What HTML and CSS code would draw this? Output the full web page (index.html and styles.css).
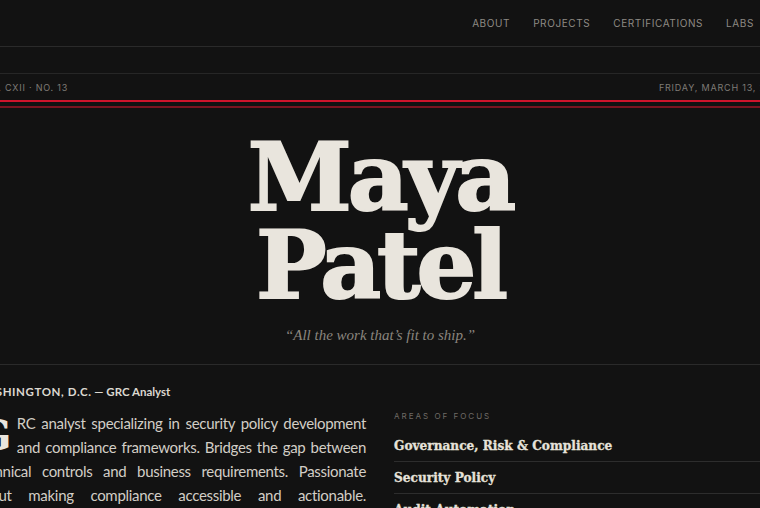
FILE: index.html
```html
<!DOCTYPE html>
<html lang="en">

<head>
    <meta charset="UTF-8">
    <meta name="viewport" content="width=device-width, initial-scale=1.0">
    <title>Maya Patel — GRC Analyst</title>
    <link rel="stylesheet" href="styles.css">
</head>

<body>
    <!-- top navigation -->
    <header class="site-nav">
        <div class="page nav-inner">
            <nav class="nav-links">
                <a href="#about">About</a>
                <a href="#projects">Projects</a>
                <a href="#certs">Certifications</a>
                <a href="#labs">Labs</a>
            </nav>
        </div>
    </header>

    <div class="spacer"></div>

    <!-- dateline -->
    <div class="dateline">
        <div class="page dateline-inner">
            <span>Vol. CXII · No. 13</span>
            <span>Friday, March 13, 2026</span>
        </div>
    </div>
    <div class="red-rule"></div>

    <!-- masthead -->
    <section class="masthead">
        <h1 class="name">Maya<br>Patel</h1>
        <p class="tagline">“All the work that’s fit to ship.”</p>
    </section>

    <!-- about + focus -->
    <main class="page columns">
        <article class="lede">
            <p class="location"><span class="city">Washington, D.C.</span> — GRC Analyst</p>
            <p class="body-text"><span class="drop-cap">G</span>RC analyst specializing in security policy development
                and compliance frameworks. Bridges the gap between technical controls and business requirements.
                Passionate about making compliance accessible and actionable. Experienced with NIST 800-53,
                ISO 27001 and SOC 2 audit programs.</p>
        </article>

        <aside class="focus">
            <h2 class="focus-title">Areas of Focus</h2>
            <ul class="focus-list">
                <li>Governance, Risk &amp; Compliance</li>
                <li>Security Policy</li>
                <li>Audit Automation</li>
                <li>Vendor Risk</li>
            </ul>
        </aside>
    </main>
</body>

</html>
```

FILE: styles.css
```css
/* base */
html {
    overflow: hidden;
}

body {
    margin: 0;
    background-color: #121212;
    color: #e9e5dd;
    font-family: Lato, "Noto Sans", sans-serif;
    display: flex;
    flex-direction: column;
    align-items: center;
}

/* wide page column, centred (spills past both edges on small windows) */
.page {
    width: 810px;
    flex-shrink: 0;
    box-sizing: border-box;
}

/* navigation */
.site-nav {
    width: 100%;
    display: flex;
    justify-content: center;
    border-bottom: 1px solid #2a2a2a;
}

.nav-inner {
    height: 46px;
    display: flex;
    justify-content: flex-end;
    align-items: center;
    padding-right: 31px;
}

.nav-links {
    display: flex;
    gap: 23px;
}

.nav-links a {
    color: #8e8a84;
    text-decoration: none;
    text-transform: uppercase;
    font-family: Inter, sans-serif;
    font-size: 10px;
    letter-spacing: 0.6px;
}

.spacer {
    height: 26px;
}

/* dateline */
.dateline {
    width: 100%;
    display: flex;
    justify-content: center;
    border-top: 1px solid #262626;
    border-bottom: 2px solid #d0142c;
}

.dateline-inner {
    height: 26px;
    display: flex;
    justify-content: space-between;
    align-items: center;
    padding-left: 3px;
    text-transform: uppercase;
    font-family: Inter, sans-serif;
    font-size: 9px;
    letter-spacing: 0.8px;
    color: #7f7b76;
}

.red-rule {
    width: 100%;
    height: 2px;
    margin-top: 4px;
    background-color: #7a1420;
}

/* masthead */
.masthead {
    width: 100%;
    text-align: center;
    border-bottom: 1px solid #2a2a2a;
    padding: 25px 0 20px;
}

.name {
    margin: 0;
    font-family: "DejaVu Serif", serif;
    font-weight: 700;
    font-size: 94px;
    line-height: 88px;
    letter-spacing: -4px;
    -webkit-text-stroke: 2px #e9e5dd;
    color: #e9e5dd;
}

.tagline {
    margin: 18px 0 0;
    font-family: "Liberation Serif", serif;
    font-style: italic;
    font-size: 15px;
    color: #8a857e;
}

/* two columns */
.columns {
    display: grid;
    grid-template-columns: 1fr 1fr;
    gap: 28px;
    padding-top: 20px;
}

.location {
    margin: 0 0 13px;
    font-size: 11.5px;
    font-weight: 700;
    color: #dcd8d0;
}

.city {
    text-transform: uppercase;
    letter-spacing: 0.6px;
}

.body-text {
    margin: 0;
    font-size: 15px;
    line-height: 24px;
    letter-spacing: -0.3px;
    text-align: justify;
    color: #d2cec6;
}

.drop-cap {
    float: left;
    font-family: "DejaVu Serif", serif;
    font-weight: 700;
    font-size: 43px;
    line-height: 40px;
    letter-spacing: 0;
    margin: 4px 5px 0 0;
    color: #e9e5dd;
}

/* areas of focus */
.focus {
    padding-top: 26px;
}

.focus-title {
    margin: 0 0 9px;
    font-family: Inter, sans-serif;
    font-size: 8px;
    font-weight: 400;
    text-transform: uppercase;
    letter-spacing: 2px;
    color: #6f6b66;
}

.focus-list {
    list-style: none;
    margin: 0;
    padding: 0;
}

.focus-list li {
    padding: 7px 0 8px;
    border-bottom: 1px solid #2d2d2d;
    font-family: "DejaVu Serif Condensed", "DejaVu Serif", serif;
    font-stretch: condensed;
    font-weight: 700;
    font-size: 13.5px;
    -webkit-text-stroke: 0.3px #e6e2da;
    color: #e6e2da;
}
```
